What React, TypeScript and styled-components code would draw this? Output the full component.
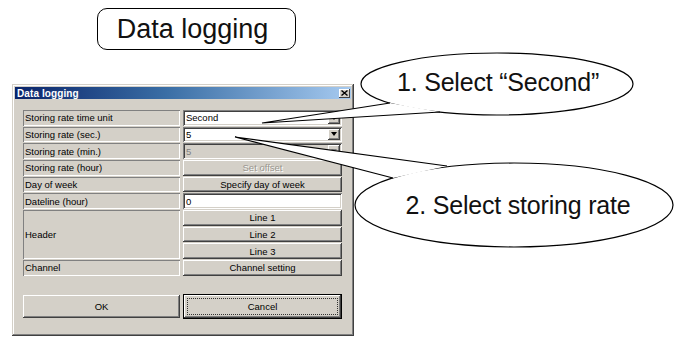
import React from "react";
import styled, { createGlobalStyle } from "styled-components";

const GlobalStyle = createGlobalStyle`
	html, body {
		margin: 0;
		padding: 0;
		background: #fff;
	}
	body {
		width: 675px;
		height: 338px;
		overflow: hidden;
		font-family: "Liberation Sans", Arial, sans-serif;
	}
`;

const Page = styled.div`
	position: relative;
	width: 675px;
	height: 338px;
	box-sizing: border-box;
	padding: 8px 0 0 12px;
`;

const Heading = styled.div`
	margin-left: 85px;
	width: 199px;
	height: 42px;
	box-sizing: border-box;
	border: 1.3px solid #000;
	border-radius: 10px;
	display: flex;
	align-items: center;
	justify-content: center;
	padding-right: 8px;
	font-size: 27px;
	color: #111;
`;

const Dialog = styled.div`
	margin-top: 34px;
	width: 342px;
	height: 252px;
	box-sizing: border-box;
	padding: 3px;
	background: #d4d0c8;
	box-shadow: inset -1px -1px #404040, inset 1px 1px #d4d0c8,
		inset -2px -2px #808080, inset 2px 2px #fff;
`;

const TitleBar = styled.div`
	height: 12px;
	display: flex;
	align-items: center;
	justify-content: space-between;
	padding: 0 1px 0 2px;
	background: linear-gradient(90deg, #0a246a 0%, #3a6ea5 45%, #a6caf0 100%);
	color: #fff;
	font-size: 10px;
	font-weight: bold;
	letter-spacing: 0.1px;
`;

const CloseBox = styled.div`
	width: 11px;
	height: 9px;
	box-sizing: border-box;
	background: #d4d0c8;
	display: flex;
	align-items: center;
	justify-content: center;
	box-shadow: inset -1px -1px #404040, inset 1px 1px #fff;
`;

const Body = styled.div`
	padding: 11px 9px 0 8px;
`;

const FormGrid = styled.div`
	display: grid;
	grid-template-columns: 157px 159px;
	grid-template-rows: repeat(10, 15.67px);
	column-gap: 3px;
	row-gap: 1px;
	font-size: 9.5px;
`;

const Label = styled.div<{ $span?: number }>`
	grid-column: 1;
	grid-row: span ${(p) => p.$span ?? 1};
	display: flex;
	align-items: center;
	padding-left: 2px;
	box-shadow: inset 1px 1px #808080, inset -1px -1px #fff;
	color: #000;
`;

const Field = styled.div<{ $disabled?: boolean }>`
	grid-column: 2;
	display: flex;
	align-items: stretch;
	box-sizing: border-box;
	padding: 2px;
	background: ${(p) => (p.$disabled ? "#d4d0c8" : "#fff")};
	color: ${(p) => (p.$disabled ? "#808080" : "#000")};
	box-shadow: inset 1px 1px #808080, inset -1px -1px #fff,
		inset 2px 2px #404040, inset -2px -2px #d4d0c8;
`;

const FieldText = styled.span`
	flex: 1;
	display: flex;
	align-items: center;
	padding-left: 1px;
`;

const DropButton = styled.div`
	width: 12px;
	background: #d4d0c8;
	display: flex;
	align-items: center;
	justify-content: center;
	box-shadow: inset -1px -1px #404040, inset 1px 1px #fff,
		inset -2px -2px #808080;
`;

const Arrow = styled.span<{ $disabled?: boolean }>`
	width: 0;
	height: 0;
	border-left: 3.5px solid transparent;
	border-right: 3.5px solid transparent;
	border-top: 4px solid ${(p) => (p.$disabled ? "#808080" : "#000")};
`;

const Btn = styled.div<{ $disabled?: boolean }>`
	grid-column: 2;
	display: flex;
	align-items: center;
	justify-content: center;
	background: #d4d0c8;
	color: ${(p) => (p.$disabled ? "#9a968e" : "#000")};
	text-shadow: ${(p) => (p.$disabled ? "1px 1px #fff" : "none")};
	box-shadow: inset -1px -1px #404040, inset 1px 1px #fff,
		inset -2px -2px #808080, inset 2px 2px #d4d0c8;
`;

const ActionRow = styled.div`
	margin-top: 19px;
	display: grid;
	grid-template-columns: 157px 159px;
	column-gap: 3px;
	height: 23px;
	font-size: 9.5px;
`;

const ActionButton = styled.div<{ $default?: boolean }>`
	position: relative;
	display: flex;
	align-items: center;
	justify-content: center;
	background: #d4d0c8;
	color: #000;
	margin: ${(p) => (p.$default ? "-1px 0" : "0")};
	box-shadow: ${(p) =>
		p.$default
			? "inset 0 0 0 1px #000, inset -2px -2px #404040, inset 2px 2px #fff, inset -3px -3px #808080"
			: "inset -1px -1px #404040, inset 1px 1px #fff, inset -2px -2px #808080, inset 2px 2px #d4d0c8"};
`;

const FocusRing = styled.span`
	position: absolute;
	inset: 4px;
	border: 1px dotted #333;
`;

const Overlay = styled.svg`
	position: absolute;
	left: 0;
	top: 0;
	pointer-events: none;
`;

const BubbleText = styled.div<{ $x: number; $y: number }>`
	position: absolute;
	left: ${(p) => p.$x}px;
	top: ${(p) => p.$y}px;
	transform: translate(-50%, -50%);
	white-space: nowrap;
	font-size: 25px;
	color: #111;
	letter-spacing: -0.2px;
`;

type Pt = [number, number];

interface CalloutProps {
	cx: number;
	cy: number;
	rx: number;
	ry: number;
	apex: Pt;
	b1: Pt;
	b2: Pt;
}

const calloutShapes: CalloutProps[] = [
	{ cx: 497, cy: 84, rx: 136, ry: 31, apex: [262, 123], b1: [390, 103], b2: [440, 112] },
	{ cx: 514, cy: 205, rx: 159, ry: 42, apex: [235, 137], b1: [447, 166], b2: [393, 178] },
];

const CalloutShape: React.FC<CalloutProps> = ({ cx, cy, rx, ry, apex, b1, b2 }) => (
	<g>
		<ellipse cx={cx} cy={cy} rx={rx} ry={ry} fill="#fff" stroke="#000" strokeWidth={1.2} />
		<polygon points={`${apex.join(",")} ${b1.join(",")} ${b2.join(",")}`} fill="#fff" />
		<polyline
			points={`${b1.join(",")} ${apex.join(",")} ${b2.join(",")}`}
			fill="none"
			stroke="#000"
			strokeWidth={1.2}
			strokeLinejoin="miter"
		/>
	</g>
);

const Combo: React.FC<{ value: string; disabled?: boolean }> = ({ value, disabled }) => (
	<Field $disabled={disabled}>
		<FieldText>{value}</FieldText>
		<DropButton>
			<Arrow $disabled={disabled} />
		</DropButton>
	</Field>
);

export default function App() {
	return (
		<>
			<GlobalStyle />
			<Page>
				<Heading>Data logging</Heading>
				<Dialog>
					<TitleBar>
						<span>Data logging</span>
						<CloseBox>
							<svg width="7" height="6" viewBox="0 0 7 6">
								<path d="M0.5 0.5 L6.5 5.5 M6.5 0.5 L0.5 5.5" stroke="#000" strokeWidth="1.4" />
							</svg>
						</CloseBox>
					</TitleBar>
					<Body>
						<FormGrid>
							<Label>Storing rate time unit</Label>
							<Combo value="Second" />
							<Label>Storing rate (sec.)</Label>
							<Combo value="5" />
							<Label>Storing rate (min.)</Label>
							<Combo value="5" disabled />
							<Label>Storing rate (hour)</Label>
							<Btn $disabled>Set offset</Btn>
							<Label>Day of week</Label>
							<Btn>Specify day of week</Btn>
							<Label>Dateline (hour)</Label>
							<Field>
								<FieldText>0</FieldText>
							</Field>
							<Label $span={3}>Header</Label>
							<Btn>Line 1</Btn>
							<Btn>Line 2</Btn>
							<Btn>Line 3</Btn>
							<Label>Channel</Label>
							<Btn>Channel setting</Btn>
						</FormGrid>
						<ActionRow>
							<ActionButton>OK</ActionButton>
							<ActionButton $default>
								<FocusRing />
								Cancel
							</ActionButton>
						</ActionRow>
					</Body>
				</Dialog>

				<Overlay width={675} height={338} viewBox="0 0 675 338">
					{calloutShapes.map((c, i) => (
						<CalloutShape key={i} {...c} />
					))}
				</Overlay>
				<BubbleText $x={498} $y={82}>1. Select “Second”</BubbleText>
				<BubbleText $x={518} $y={205}>2. Select storing rate</BubbleText>
			</Page>
		</>
	);
}
